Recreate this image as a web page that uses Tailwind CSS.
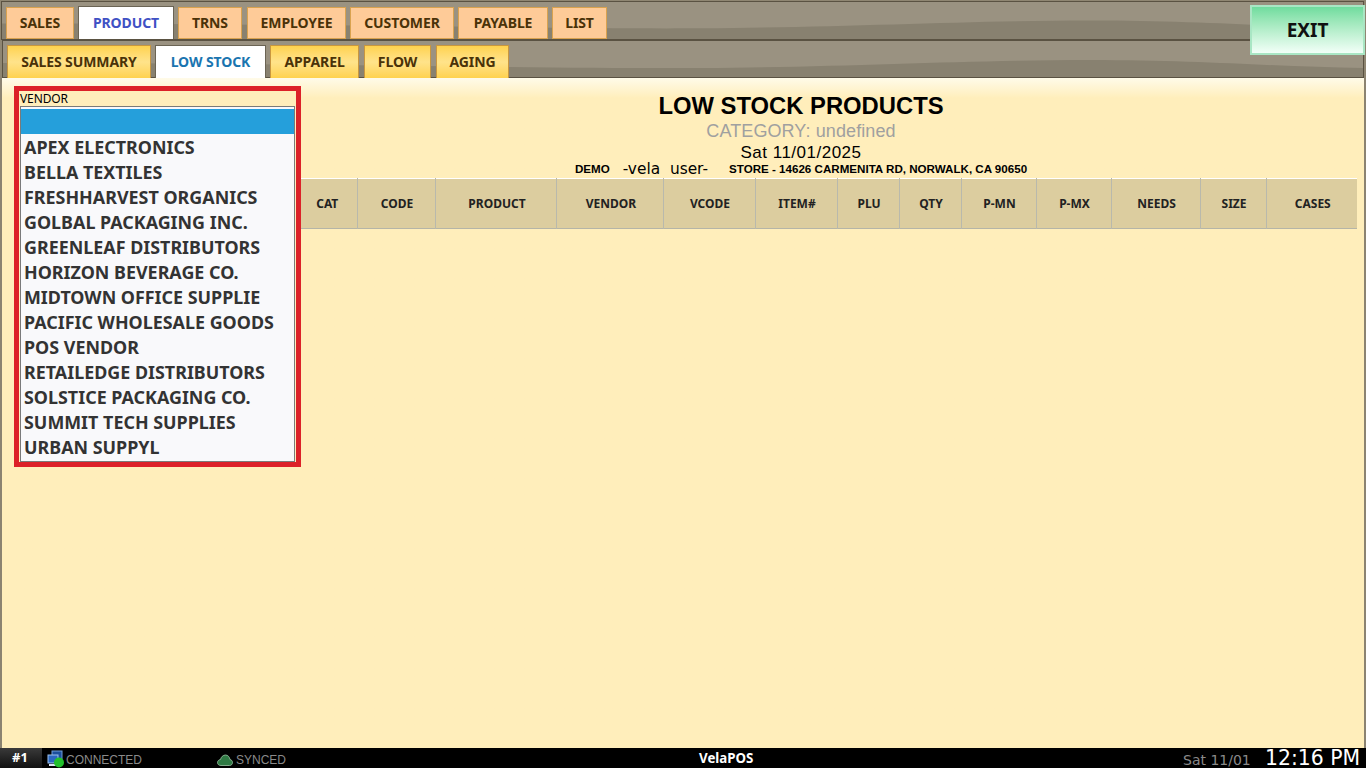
<!DOCTYPE html>
<html lang="en">
<head>
  <meta charset="UTF-8">
  <title>VelaPOS - Low Stock</title>
  <script src="https://cdn.jsdelivr.net/npm/@tailwindcss/browser@4"></script>
</head>
<body class="w-[1366px] h-[768px] overflow-hidden bg-[#8f8672] font-['Noto_Sans',sans-serif]">
<div class="relative flex flex-col w-full h-full">

  <!-- Top tabs -->
  <div class="relative h-[39px] bg-[#9a9281] border border-[#5a5242] mt-px mr-[2px] ml-px">
    <svg class="absolute inset-0 w-full h-full" viewBox="0 0 1363 38" preserveAspectRatio="none"><path d="M0 22C300 22 560 28 700 27C850 26 960 19 1090 19C1200 19 1280 26 1363 27V38H0Z" fill="#888170"/></svg>
    <div class="relative flex gap-[4px] pl-[4px] pt-[5px] h-full text-[14px] tracking-[-0.1px] font-bold text-[#4a3208]">
      <a class="w-[68px] h-[32px] pb-px flex items-center justify-center bg-[#fecb98] border border-[#d9a24f]">SALES</a>
      <a class="w-[96px] h-[33px] pb-px flex items-center justify-center bg-white border border-[#6b6454] border-b-0 text-[#3f51c4] -mt-px">PRODUCT</a>
      <a class="w-[64px] h-[32px] pb-px flex items-center justify-center bg-[#fecb98] border border-[#d9a24f]">TRNS</a>
      <a class="w-[99px] h-[32px] pb-px flex items-center justify-center bg-[#fecb98] border border-[#d9a24f] ml-px">EMPLOYEE</a>
      <a class="w-[104px] h-[32px] pb-px flex items-center justify-center bg-[#fecb98] border border-[#d9a24f]">CUSTOMER</a>
      <a class="w-[90px] h-[32px] pb-px flex items-center justify-center bg-[#fecb98] border border-[#d9a24f]">PAYABLE</a>
      <a class="w-[55px] h-[32px] pb-px flex items-center justify-center bg-[#fecb98] border border-[#d9a24f]">LIST</a>
    </div>
  </div>

  <!-- Sub tabs -->
  <div class="relative h-[38px] bg-[#9a9281] border border-[#5a5242] mr-[2px] ml-[2px]">
    <svg class="absolute inset-0 w-full h-full" viewBox="0 0 1363 36" preserveAspectRatio="none"><path d="M0 22C300 22 560 28 700 27C850 26 960 19 1090 19C1200 19 1280 26 1363 27V36H0Z" fill="#888170"/></svg>
    <div class="relative flex gap-[4px] pl-[4px] pt-[4px] h-full text-[14px] tracking-[-0.1px] font-bold text-[#4a3208]">
      <a class="w-[144px] h-[33px] pb-px flex items-center justify-center bg-gradient-to-b from-[#ffd24d] via-[#ffe38a] to-[#ffd24d] border-x border-t border-[#c9973f]">SALES SUMMARY</a>
      <a class="w-[111px] h-[34px] pb-[2px] flex items-center justify-center bg-white border-x border-t border-[#6b6454] text-[#1a75b0]">LOW STOCK</a>
      <a class="w-[89px] h-[33px] pb-px flex items-center justify-center bg-gradient-to-b from-[#ffd24d] via-[#ffe38a] to-[#ffd24d] border-x border-t border-[#c9973f]">APPAREL</a>
      <a class="w-[67px] h-[33px] pb-px flex items-center justify-center bg-gradient-to-b from-[#ffd24d] via-[#ffe38a] to-[#ffd24d] border-x border-t border-[#c9973f] ml-px">FLOW</a>
      <a class="w-[73px] h-[33px] pb-px flex items-center justify-center bg-gradient-to-b from-[#ffd24d] via-[#ffe38a] to-[#ffd24d] border-x border-t border-[#c9973f] ml-px">AGING</a>
    </div>
  </div>

  <!-- Exit button sits over both tab bars -->
  <button class="absolute left-[1250px] top-[5px] w-[115px] h-[50px] bg-gradient-to-b from-[#6fdc9e] to-[#f2fff8] border-2 border-[#a9e6c4] text-[19px] font-bold text-[#111]">EXIT</button>

  <!-- Report -->
  <main class="relative flex-1 bg-gradient-to-b from-[#fffbe9] to-[#ffeebb] to-[3%] border-x-2 border-[#8b8371]">
    <div class="ml-[236px] pt-[13px] text-center font-['Liberation_Sans',sans-serif] text-black">
      <h1 class="text-[23.8px] leading-[30px] font-bold">LOW STOCK PRODUCTS</h1>
      <p class="text-[18px] leading-[21px] tracking-[0.1px] text-[#a0a0a0]">CATEGORY: undefined</p>
      <p class="text-[17px] leading-[22px] h-[20px] tracking-[0.5px]">Sat 11/01/2025</p>
      <p class="flex items-center justify-center h-[16px] pb-[2px] text-[11.6px] font-bold">
        <span>DEMO</span>
        <span class="ml-[13px] mt-[2px] font-['DejaVu_Sans',sans-serif] font-normal text-[15.4px]">-vela&nbsp;&nbsp;user-</span>
        <span class="ml-[21px]">STORE - 14626 CARMENITA RD, NORWALK, CA 90650</span>
      </p>
    </div>

    <table class="ml-[294px] w-[1061px] table-fixed border-collapse text-[12px] font-bold text-[#222]">
      <thead>
        <tr class="h-[50px] bg-[#dccd9f] border-t border-t-white border-b border-b-[#b5b5a8]">
          <th class="w-[61px] border-r border-[#b9b9ac] pl-[2px]">CAT</th>
          <th class="w-[78px] border-r border-[#b9b9ac] pl-[2px]">CODE</th>
          <th class="w-[121px] border-r border-[#b9b9ac] pl-[3px]">PRODUCT</th>
          <th class="w-[107px] border-r border-[#b9b9ac] pl-[3px]">VENDOR</th>
          <th class="w-[92px] border-r border-[#b9b9ac] pl-[2px]">VCODE</th>
          <th class="w-[82px] border-r border-[#b9b9ac] pl-[2px]">ITEM#</th>
          <th class="w-[62px] border-r border-[#b9b9ac] pl-[2px]">PLU</th>
          <th class="w-[62px] border-r border-[#b9b9ac] pl-[2px]">QTY</th>
          <th class="w-[75px] border-r border-[#b9b9ac] pl-[2px]">P-MN</th>
          <th class="w-[75px] border-r border-[#b9b9ac] pl-[2px]">P-MX</th>
          <th class="w-[89px] border-r border-[#b9b9ac] pl-[2px]">NEEDS</th>
          <th class="w-[66px] border-r border-[#b9b9ac] pl-[2px]">SIZE</th>
          <th class="pl-[2px]">CASES</th>
        </tr>
      </thead>
    </table>

    <!-- Vendor picker lies over the table's left edge -->
    <div class="absolute left-[12px] top-[8px] w-[287px] h-[381px] border-[5px] border-[#dc2128] bg-[#ffeebb] px-px">
      <label class="block h-[15px] text-[12px] tracking-[-0.1px] leading-[15px] text-black">VENDOR</label>
      <ul class="h-[356px] w-[275px] bg-[#f9f9fb] border border-[#7a7a7a] pt-[2px] text-[17.9px] font-bold leading-[25px] text-[#333]">
        <li class="h-[25px] mb-px bg-[#259fdb]"></li>
        <li class="h-[25px] pl-[3px]">APEX ELECTRONICS</li>
        <li class="h-[25px] pl-[3px]">BELLA TEXTILES</li>
        <li class="h-[25px] pl-[3px]">FRESHHARVEST ORGANICS</li>
        <li class="h-[25px] pl-[3px]">GOLBAL PACKAGING INC.</li>
        <li class="h-[25px] pl-[3px]">GREENLEAF DISTRIBUTORS</li>
        <li class="h-[25px] pl-[3px]">HORIZON BEVERAGE CO.</li>
        <li class="h-[25px] pl-[3px]">MIDTOWN OFFICE SUPPLIE</li>
        <li class="h-[25px] pl-[3px]">PACIFIC WHOLESALE GOODS</li>
        <li class="h-[25px] pl-[3px]">POS VENDOR</li>
        <li class="h-[25px] pl-[3px]">RETAILEDGE DISTRIBUTORS</li>
        <li class="h-[25px] pl-[3px]">SOLSTICE PACKAGING CO.</li>
        <li class="h-[25px] pl-[3px]">SUMMIT TECH SUPPLIES</li>
        <li class="h-[25px] pl-[3px]">URBAN SUPPYL</li>
      </ul>
    </div>
  </main>

  <!-- Status bar -->
  <footer class="relative flex items-center h-[20px] bg-black text-[12px] font-['Liberation_Sans',sans-serif] text-[#8a8a8a]">
    <div class="w-[42px] h-full flex items-center justify-center bg-gradient-to-b from-[#3a3a3a] to-[#111] text-white font-bold text-[13px] font-['Noto_Sans',sans-serif] pr-[2px]">#1</div>
    <svg class="ml-[5px] mt-[2px] w-[18px] h-[18px]" viewBox="0 0 18 18">
      <rect x="5" y="1" width="10" height="8" fill="#1c4f9c" stroke="#6f9bd8"/>
      <rect x="1" y="5" width="10" height="8" fill="#2b68c0" stroke="#9cc0ee"/>
      <rect x="2" y="14" width="9" height="2" fill="#d9e4f2"/>
      <circle cx="12" cy="12.5" r="5" fill="#22c02c"/>
    </svg>
    <span class="ml-px w-[151px] pt-[3px]">CONNECTED</span>
    <svg class="mt-[3px] w-[16px] h-[12px]" viewBox="0 0 16 12"><path d="M4 11.500C1.500 11.500 .5 10 .5 8.500S2 5.500 3.500 5.500C4 3 6 1 8.500 1S12.500 3 13 5.500C14.500 5.800 15.500 7 15.500 8.500S14.500 11.500 12.500 11.500Z" fill="#2f7a44" stroke="#9fc6a8" stroke-width=".8"/></svg>
    <span class="ml-[3px] pt-[3px]">SYNCED</span>
    <span class="absolute left-[699px] top-0 leading-[20px] text-white font-bold font-['Noto_Sans',sans-serif] text-[13.3px]">VelaPOS</span>
    <span class="absolute left-[1183px] top-[3px] font-['DejaVu_Sans',sans-serif] text-[14px] leading-[18px] text-[#8a8a8a]">Sat 11/01</span>
    <span class="absolute left-[1265px] top-0 font-['DejaVu_Sans',sans-serif] text-[20.4px] leading-[20px] text-white">12:16 PM</span>
  </footer>
</div>
</body>
</html>
